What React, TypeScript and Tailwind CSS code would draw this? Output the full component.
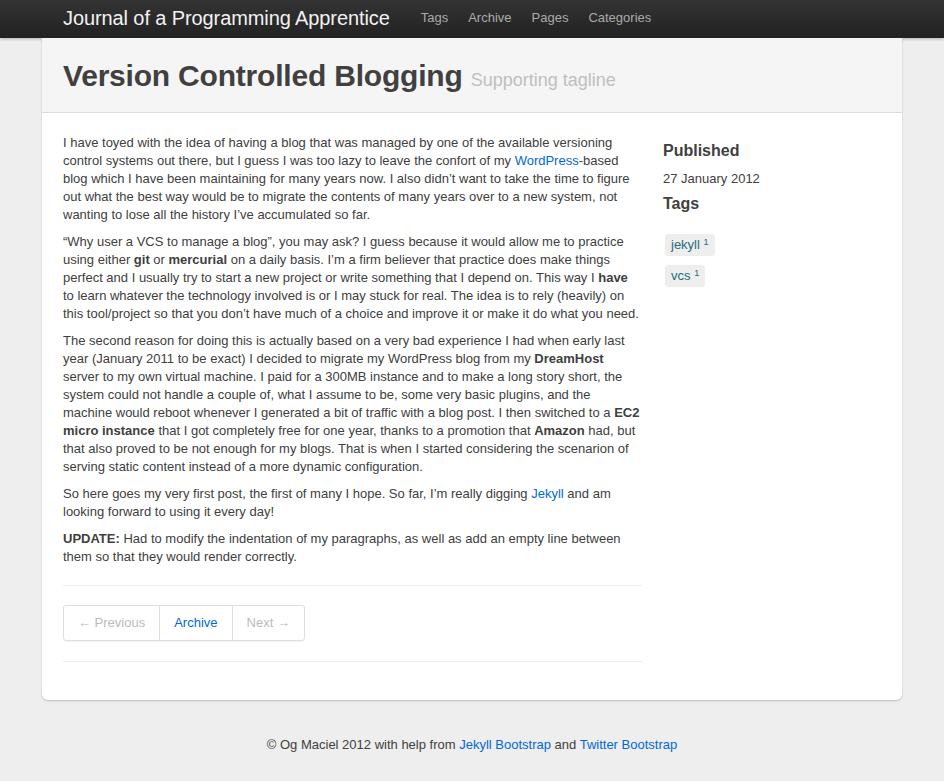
import React from 'react';

const linkBlue = 'text-[#0069d6]';

const Tag = ({ name, count }: { name: string; count: number }) => (
  <li className="mb-[9px]">
    <a className="inline-block h-[22px] rounded-[3px] bg-[#eeeeee] px-[6px] text-[13px] leading-[22px] text-[#1d6c7c]">
      {name} <sup className="text-[9px]">{count}</sup>
    </a>
  </li>
);

export default function App() {
  return (
    <div className="min-h-[781px] bg-[#eeeeee] font-['Liberation_Sans',Arial,sans-serif] text-[13px] leading-[18px] text-[#404040]">
      {/* top bar */}
      <div className="h-[38px] bg-gradient-to-b from-[#333333] to-[#222222] shadow-[0_1px_3px_rgba(0,0,0,0.25)]">
        <div className="mx-auto flex h-full w-[860px] items-center px-5 pb-[2px]">
          <a className="pl-px text-[20px] leading-[20px] tracking-[-0.1px] text-[#f2f2f2]">Journal of a Programming Apprentice</a>
          <ul className="ml-[21px] flex text-[13px] text-[#aaaaaa]">
            <li className="px-[10px]">Tags</li>
            <li className="px-[10px]">Archive</li>
            <li className="px-[10px]">Pages</li>
            <li className="px-[10px]">Categories</li>
          </ul>
        </div>
      </div>

      {/* content card */}
      <div className="mx-auto w-[860px] overflow-hidden rounded-b-[6px] bg-white shadow-[0_1px_2px_rgba(0,0,0,0.2)]">
        <div className="border-b border-[#dddddd] bg-[#f5f5f5] px-5 pt-5 pb-[18px]">
          <h1 className="h-[36px] pl-px text-[30px] font-bold leading-[36px] tracking-[-0.2px] text-[#404040]">
            Version Controlled Blogging{' '}
            <small className="text-[18px] font-normal leading-[18px] tracking-normal text-[#bfbfbf]">Supporting tagline</small>
          </h1>
        </div>

        <div className="flex gap-5 px-5 pt-[21px] pb-[38px]">
          <div className="w-[580px] whitespace-nowrap pl-px">
            <p className="mb-[9px]">
              I have toyed with the idea of having a blog that was managed by one of the available versioning
              <br />
              control systems out there, but I guess I was too lazy to leave the confort of my{' '}
              <a className={linkBlue}>WordPress</a>-based
              <br />
              blog which I have been maintaining for many years now. I also didn’t want to take the time to figure
              <br />
              out what the best way would be to migrate the contents of many years over to a new system, not
              <br />
              wanting to lose all the history I’ve accumulated so far.
            </p>
            <p className="mb-[9px]">
              “Why user a VCS to manage a blog”, you may ask? I guess because it would allow me to practice
              <br />
              using either <strong>git</strong> or <strong>mercurial</strong> on a daily basis. I’m a firm believer that
              practice does make things
              <br />
              perfect and I usually try to start a new project or write something that I depend on. This way I{' '}
              <strong>have</strong>
              <br />
              to learn whatever the technology involved is or I may stuck for real. The idea is to rely (heavily) on
              <br />
              this tool/project so that you don’t have much of a choice and improve it or make it do what you need.
            </p>
            <p className="mb-[9px]">
              The second reason for doing this is actually based on a very bad experience I had when early last
              <br />
              year (January 2011 to be exact) I decided to migrate my WordPress blog from my <strong>DreamHost</strong>
              <br />
              server to my own virtual machine. I paid for a 300MB instance and to make a long story short, the
              <br />
              system could not handle a couple of, what I assume to be, some very basic plugins, and the
              <br />
              machine would reboot whenever I generated a bit of traffic with a blog post. I then switched to a{' '}
              <strong>EC2</strong>
              <br />
              <strong>micro instance</strong> that I got completely free for one year, thanks to a promotion that{' '}
              <strong>Amazon</strong> had, but
              <br />
              that also proved to be not enough for my blogs. That is when I started considering the scenarion of
              <br />
              serving static content instead of a more dynamic configuration.
            </p>
            <p className="mb-[9px]">
              So here goes my very first post, the first of many I hope. So far, I’m really digging{' '}
              <a className={linkBlue}>Jekyll</a> and am
              <br />
              looking forward to using it every day!
            </p>
            <p>
              <strong>UPDATE:</strong> Had to modify the indentation of my paragraphs, as well as add an empty line between
              <br />
              them so that they would render correctly.
            </p>

            <hr className="mt-[19px] mb-[19px] border-t border-[#eeeeee]" />

            <ul className="flex w-fit rounded-[3px] border border-[#dddddd] shadow-[0_1px_2px_rgba(0,0,0,0.05)]">
              <li className="px-[14px] leading-[34px] text-[#bbbbbb]">← Previous</li>
              <li className={`border-l border-[#dddddd] px-[14px] leading-[34px] ${linkBlue}`}>Archive</li>
              <li className="border-l border-[#dddddd] px-[14px] leading-[34px] text-[#bbbbbb]">Next →</li>
            </ul>

            <hr className="mt-[20px] border-t border-[#eeeeee]" />
          </div>

          <div className="w-[220px] pt-2 pl-px">
            <h4 className="text-[16px] font-bold leading-[18px]">Published</h4>
            <div className="mt-[10px]">27 January 2012</div>
            <h4 className="mt-[7px] text-[16px] font-bold leading-[18px]">Tags</h4>
            <ul className="mt-[21px] pl-[2px]">
              <Tag name="jekyll" count={1} />
              <Tag name="vcs" count={1} />
            </ul>
          </div>
        </div>
      </div>

      <footer className="pt-[36px] text-center">
        © Og Maciel 2012 with help from <a className={linkBlue}>Jekyll Bootstrap</a> and{' '}
        <a className={linkBlue}>Twitter Bootstrap</a>
      </footer>
    </div>
  );
}
